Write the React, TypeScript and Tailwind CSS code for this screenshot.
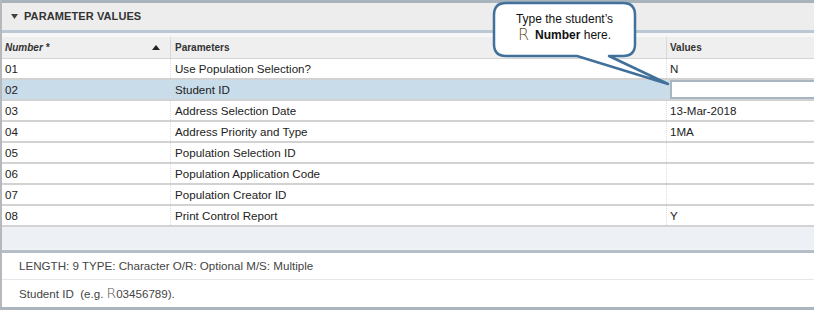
import React from "react";

const rows = [
  ["01", "Use Population Selection?", "N"],
  ["02", "Student ID", ""],
  ["03", "Address Selection Date", "13-Mar-2018"],
  ["04", "Address Priority and Type", "1MA"],
  ["05", "Population Selection ID", ""],
  ["06", "Population Application Code", ""],
  ["07", "Population Creator ID", ""],
  ["08", "Print Control Report", "Y"],
];

export default function App() {
  return (
    <div
      className="relative w-[814px] h-[313px] bg-white overflow-hidden text-[11.6px] text-[#222]"
      style={{ fontFamily: "'Liberation Sans', Arial, sans-serif" }}
    >
      <div className="flex flex-col border-l-2 border-[#b5b9bd]">
        <div className="h-[3px] bg-[#a8b3bc]" />
        {/* section header */}
        <div className="h-[27px] bg-[#ededed] flex items-center pl-[9px] gap-[6px]">
          <svg width="7" height="5" viewBox="0 0 7 5">
            <path d="M0 0 H7 L3.5 5 Z" fill="#444" />
          </svg>
          <span className="font-bold text-[11px] tracking-[0.1px] text-[#333]">PARAMETER VALUES</span>
        </div>
        <div className="h-[3px] bg-[#b9c8d4]" />
        <div className="h-[4px] bg-[#f7f7f7]" />
        {/* column header */}
        <div className="h-[22px] bg-[#efefef] flex border-b border-[#d4d4d4] text-[10px] font-bold text-[#333]">
          <div className="w-[169px] flex items-center justify-between pl-[3px] pr-[10px] border-r border-[#d9d9d9]">
            <span className="italic">Number *</span>
            <svg width="8" height="5" viewBox="0 0 8 5">
              <path d="M0 5 L4 0 L8 5 Z" fill="#222" />
            </svg>
          </div>
          <div className="w-[496px] flex items-center pl-[4px] border-r border-[#d9d9d9]">Parameters</div>
          <div className="flex-1 flex items-center pl-[3px]">Values</div>
        </div>
        {rows.map((r, i) => {
          const sel = i === 1;
          return (
            <div
              key={r[0]}
              className={`h-[21px] flex border-b-2 border-[#d2d2d2] ${sel ? "bg-[#c9dce9]" : "bg-white"}`}
            >
              <div className="w-[169px] flex items-center pl-[3px] border-r border-dotted border-[#dddddd]">{r[0]}</div>
              <div className="w-[496px] flex items-center pl-[4px] border-r border-dotted border-[#dddddd]">{r[1]}</div>
              <div className="flex-1 flex items-center pl-[3px]">
                {sel ? (
                  <div className="w-full h-[19px] bg-white border-2 border-[#a9b6c2] border-r-0" />
                ) : (
                  r[2]
                )}
              </div>
            </div>
          );
        })}
        <div className="h-[23px] bg-[#edf0f4] border-b border-[#f5f5f5]" />
        <div className="h-[3px] bg-[#b3bec8]" />
        <div className="h-[27px] flex items-center pl-[17px] border-b border-[#e3e7ea] text-[#444]">
          LENGTH: 9 TYPE: Character O/R: Optional M/S: Multiple
        </div>
        <div className="h-[27px] flex items-center pl-[17px] text-[#444]">
          Student ID&nbsp; (e.g.{" "}
          <span className="text-[14px] font-light text-[#555] ml-[3px]" style={{ fontFamily: "'DejaVu Sans', sans-serif" }}>R</span>
          03456789).
        </div>
      </div>
      <div className="h-[3px] bg-[#aab5be]" />

      {/* callout */}
      <svg className="absolute left-0 top-0" width="814" height="313">
        <path
          d="M506 3 H623 Q635 3 635 15 V44 Q635 56 623 56 H609 L668 84 L577 56 H506 Q494 56 494 44 V15 Q494 3 506 3 Z"
          fill="white"
          stroke="#41709b"
          strokeWidth="2.5"
          strokeLinejoin="round"
        />
      </svg>
      <div className="absolute left-[494px] top-[12px] w-[141px] flex flex-col items-center text-[12px] leading-[15px] text-[#111]">
        <span>Type the student’s</span>
        <span className="flex items-end">
          <span className="text-[16px] leading-[16px] font-light text-[#5a4a20] mr-[6px]" style={{ fontFamily: "'DejaVu Sans', sans-serif" }}>R</span>
          <span className="font-bold">Number</span>&nbsp;here.
        </span>
      </div>
    </div>
  );
}
